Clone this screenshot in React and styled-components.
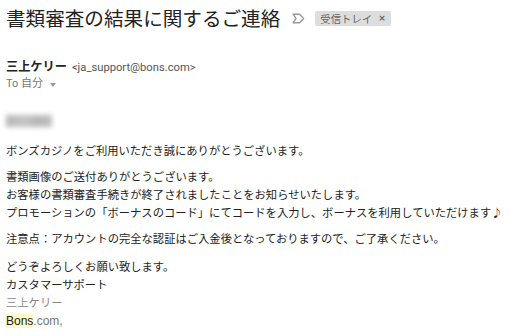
import styled, { createGlobalStyle } from 'styled-components';

//===
// Global
//===

const Global = createGlobalStyle`
    body{
        margin: 0;
        background: #fff;
        font-family: "Noto Sans CJK JP", "Liberation Sans", sans-serif;
        color: #222;
    }
`

//===
// Styled
//===

const Mail = styled.div`
    padding: 6px 0 0 6px;
    width: 519px;
    height: 336px;
    box-sizing: border-box;
    overflow: hidden;
`

const SubjectRow = styled.div`
    display: flex;
    align-items: center;
    height: 24px;
`

const Subject = styled.h1`
    margin: 0;
    font-size: 19.6px;
    font-weight: 400;
    line-height: 24px;
    color: #222;
    white-space: nowrap;
`

const Marker = styled.svg`
    margin-left: 12px;
    flex: none;
`

const Badge = styled.span`
    display: inline-flex;
    align-items: center;
    gap: 6px;
    margin-left: 10px;
    padding: 0 5px;
    height: 15px;
    background: #dddddd;
    border-radius: 2px;
    font-size: 10.4px;
    color: #666;
    white-space: nowrap;
    .x{
        font-family: "DejaVu Sans", sans-serif;
        font-weight: 700;
        font-size: 9px;
        color: #666;
    }
`

const Sender = styled.div`
    margin-top: 26px;
    line-height: 17px;
    white-space: nowrap;
    .name{
        font-size: 12.2px;
        font-weight: 700;
        color: #222;
    }
    .addr{
        margin-left: 5px;
        font-family: Roboto, "Liberation Sans", sans-serif;
        font-size: 11.2px;
        color: #555;
    }
`

const ToLine = styled.div`
    display: flex;
    align-items: center;
    line-height: 16px;
    font-family: Roboto, "Noto Sans CJK JP", sans-serif;
    font-size: 11px;
    color: #777;
    .arrow{
        margin-left: 7px;
        margin-top: 2px;
        width: 0;
        height: 0;
        border-left: 3px solid transparent;
        border-right: 3px solid transparent;
        border-top: 4px solid #999;
    }
`

const Blurred = styled.div`
    margin-top: 23px;
    width: 46px;
    height: 12px;
    background: linear-gradient(90deg, #aaa 0%, #bbb 40%, #aaa 70%, #b4b4b4 100%);
    filter: blur(2.5px);
    opacity: 0.85;
`

const Body = styled.div`
    margin-top: 14px;
    font-size: 11.3px;
    line-height: 18px;
    color: #222;
    white-space: nowrap;
`

const Para = styled.p`
    margin: 0 0 ${p => p.$gap || 8}px 0;
`

const Muted = styled.span`
    color: #888;
`

const Site = styled.span`
    font-family: "Liberation Sans", sans-serif;
    font-size: 12px;
    color: #777;
    mark{
        background: #fff9c4;
        color: #222;
    }
`

//===
// Component
//===

const App = () => {
    return(
        <>
        <Global />
        <Mail>
            <SubjectRow>
                <Subject>書類審査の結果に関するご連絡</Subject>
                <Marker width="13" height="11" viewBox="0 0 13 11">
                    <path d="M1 1.2 H7.6 L11.6 5.5 L7.6 9.8 H1 L4 5.5 Z" fill="none" stroke="#9a9a9a" strokeWidth="1.4" strokeLinejoin="round" />
                </Marker>
                <Badge>受信トレイ<span className="x">×</span></Badge>
            </SubjectRow>

            <Sender>
                <span className="name">三上ケリー</span>
                <span className="addr">&lt;ja_support@bons.com&gt;</span>
            </Sender>
            <ToLine>
                To 自分
                <span className="arrow"></span>
            </ToLine>

            <Blurred />

            <Body>
                <Para>ボンズカジノをご利用いただき誠にありがとうございます。</Para>
                <Para>
                    書類画像のご送付ありがとうございます。<br />
                    お客様の書類審査手続きが終了されましたことをお知らせいたします。<br />
                    プロモーションの「ボーナスのコード」にてコードを入力し、ボーナスを利用していただけます♪
                </Para>
                <Para $gap={10}>注意点：アカウントの完全な認証はご入金後となっておりますので、ご了承ください。</Para>
                <Para>
                    どうぞよろしくお願い致します。<br />
                    カスタマーサポート<br />
                    <Muted>三上ケリー</Muted><br />
                    <Site><mark>Bons</mark>.com,</Site>
                </Para>
            </Body>
        </Mail>
        </>
    )
}

export default App
